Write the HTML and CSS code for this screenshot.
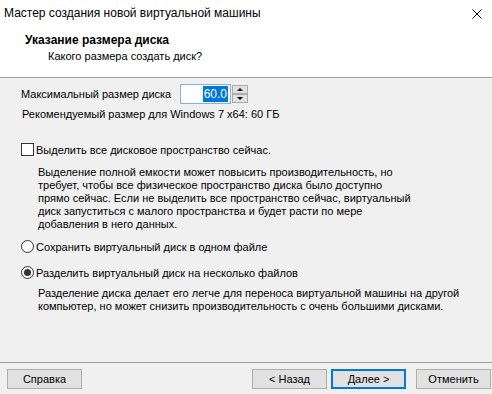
FILE: index.html
```html
<!DOCTYPE html>
<html lang="ru">
<head>
    <meta charset="UTF-8">
    <title>Мастер создания новой виртуальной машины</title>
    <link rel="stylesheet" href="styles.css">
</head>
<body>
    <div class="dialog">
        <!-- Header -->
        <div class="wizard-top">
            <div class="titlebar">
                <span class="title">Мастер создания новой виртуальной машины</span>
                <span class="close">
                    <svg width="10" height="10" viewBox="0 0 10 10">
                        <path d="M0.5 0.5 L9.5 9.5 M9.5 0.5 L0.5 9.5" stroke="#000" stroke-width="1" fill="none"/>
                    </svg>
                </span>
            </div>
            <div class="wizard-head">
                <div class="head-title">Указание размера диска</div>
                <div class="head-sub">Какого размера создать диск?</div>
            </div>
        </div>

        <!-- Content -->
        <div class="wizard-body">
            <div class="size-row">
                <span class="size-label">Максимальный размер диска</span>
                <div class="spin">
                    <div class="spin-field"><span class="selected">60.0</span></div>
                    <div class="spin-buttons">
                        <div class="spin-btn"><span class="arrow-up"></span></div>
                        <div class="spin-btn"><span class="arrow-down"></span></div>
                    </div>
                </div>
            </div>
            <div class="recommend">Рекомендуемый размер для Windows 7 x64: 60 ГБ</div>

            <label class="option option-check">
                <span class="checkbox"></span>
                <span>Выделить все дисковое пространство сейчас.</span>
            </label>
            <p class="note note-alloc">
                Выделение полной емкости может повысить производительность, но<br>
                требует, чтобы все физическое пространство диска было доступно<br>
                прямо сейчас. Если не выделить все пространство сейчас, виртуальный<br>
                диск запуститься с малого пространства и будет расти по мере<br>
                добавления в него данных.
            </p>

            <label class="option option-single">
                <span class="radio"></span>
                <span>Сохранить виртуальный диск в одном файле</span>
            </label>
            <label class="option option-split">
                <span class="radio checked"></span>
                <span>Разделить виртуальный диск на несколько файлов</span>
            </label>
            <p class="note note-split">
                Разделение диска делает его легче для переноса виртуальной машины на другой<br>
                компьютер, но может снизить производительность с очень большими дисками.
            </p>
        </div>

        <!-- Footer -->
        <div class="wizard-footer">
            <button class="btn">Справка</button>
            <div class="nav-buttons">
                <button class="btn">&lt; Назад</button>
                <button class="btn btn-default">Далее &gt;</button>
                <button class="btn btn-cancel">Отменить</button>
            </div>
        </div>
    </div>
</body>
</html>
```

FILE: styles.css
```css
/* Base */
body, html {
    margin: 0;
    padding: 0;
    font-family: 'Liberation Sans', 'Noto Sans', sans-serif;
    font-size: 11px;
    color: #000;
    background: #f0f0f0;
}

.dialog {
    width: 492px;
    height: 394px;
    display: flex;
    flex-direction: column;
    overflow: hidden;
    white-space: nowrap;
}

/* Header */
.wizard-top {
    background: #fff;
    height: 77px;
    border-bottom: 1px solid #a0a0a0;
}

.titlebar {
    height: 26px;
    display: flex;
    align-items: center;
    justify-content: space-between;
    padding-left: 4px;
}

.title {
    font-size: 12px;
    line-height: 16px;
}

.close {
    width: 30px;
    display: flex;
    justify-content: center;
    padding-top: 1px;
}

.wizard-head {
    padding: 7px 0 0 25px;
    line-height: 15px;
}

.head-title {
    font-size: 12px;
    font-weight: bold;
}

.head-sub {
    margin: 1px 0 0 23px;
}

/* Content */
.wizard-body {
    flex: 1;
    padding: 6px 0 0 21px;
}

.size-row {
    display: flex;
    align-items: center;
    height: 20px;
}

.size-label {
    width: 159px;
    flex-shrink: 0;
}

.spin {
    display: flex;
    height: 20px;
}

.spin-field {
    width: 47px;
    height: 18px;
    border: 1px solid #7eb4ea;
    background: #fff;
    display: flex;
    align-items: center;
    justify-content: flex-end;
    padding-right: 2px;
    font-size: 12px;
}

.selected {
    background: #0078d7;
    color: #fff;
    line-height: 16px;
    padding: 0 1px;
}

.spin-buttons {
    display: flex;
    flex-direction: column;
    justify-content: space-between;
    margin-left: 1px;
    padding: 1px 0;
}

.spin-btn {
    width: 14px;
    height: 8px;
    border: 1px solid #adadad;
    background: #e1e1e1;
    display: flex;
    align-items: center;
    justify-content: center;
}

.arrow-up,
.arrow-down {
    width: 0;
    height: 0;
    border-left: 3px solid transparent;
    border-right: 3px solid transparent;
}

.arrow-up {
    border-bottom: 3px solid #000;
}

.arrow-down {
    border-top: 3px solid #000;
}

.recommend {
    margin: 4px 0 0 1px;
    line-height: 13px;
}

.option {
    display: flex;
    align-items: center;
    gap: 2px;
    height: 13px;
}

.option-check {
    margin-top: 22px;
}

.option-single {
    margin-top: 9px;
}

.option-split {
    margin-top: 13px;
}

.checkbox {
    width: 11px;
    height: 11px;
    border: 1px solid #333;
    background: #fff;
}

.radio {
    width: 11px;
    height: 11px;
    border: 1px solid #333;
    border-radius: 50%;
    background: #fff;
    display: flex;
    align-items: center;
    justify-content: center;
}

.radio.checked::after {
    content: '';
    width: 7px;
    height: 7px;
    border-radius: 50%;
    background: #333;
}

.note {
    margin: 0 0 0 17px;
    line-height: 13px;
}

.note-alloc {
    margin-top: 10px;
}

.note-split {
    margin-top: 8px;
}

/* Footer */
.wizard-footer {
    height: 32px;
    border-top: 1px solid #a0a0a0;
    display: flex;
    justify-content: space-between;
    padding: 6px 1px 0 7px;
    box-sizing: border-box;
}

.nav-buttons {
    display: flex;
    gap: 4px;
}

.btn {
    width: 75px;
    height: 20px;
    padding: 0;
    border: 1px solid #adadad;
    background: #e1e1e1;
    font-family: inherit;
    font-size: 11px;
    color: #000;
}

.btn-default {
    border: 2px solid #0078d7;
}

.btn-cancel {
    margin-left: 6px;
}
```
